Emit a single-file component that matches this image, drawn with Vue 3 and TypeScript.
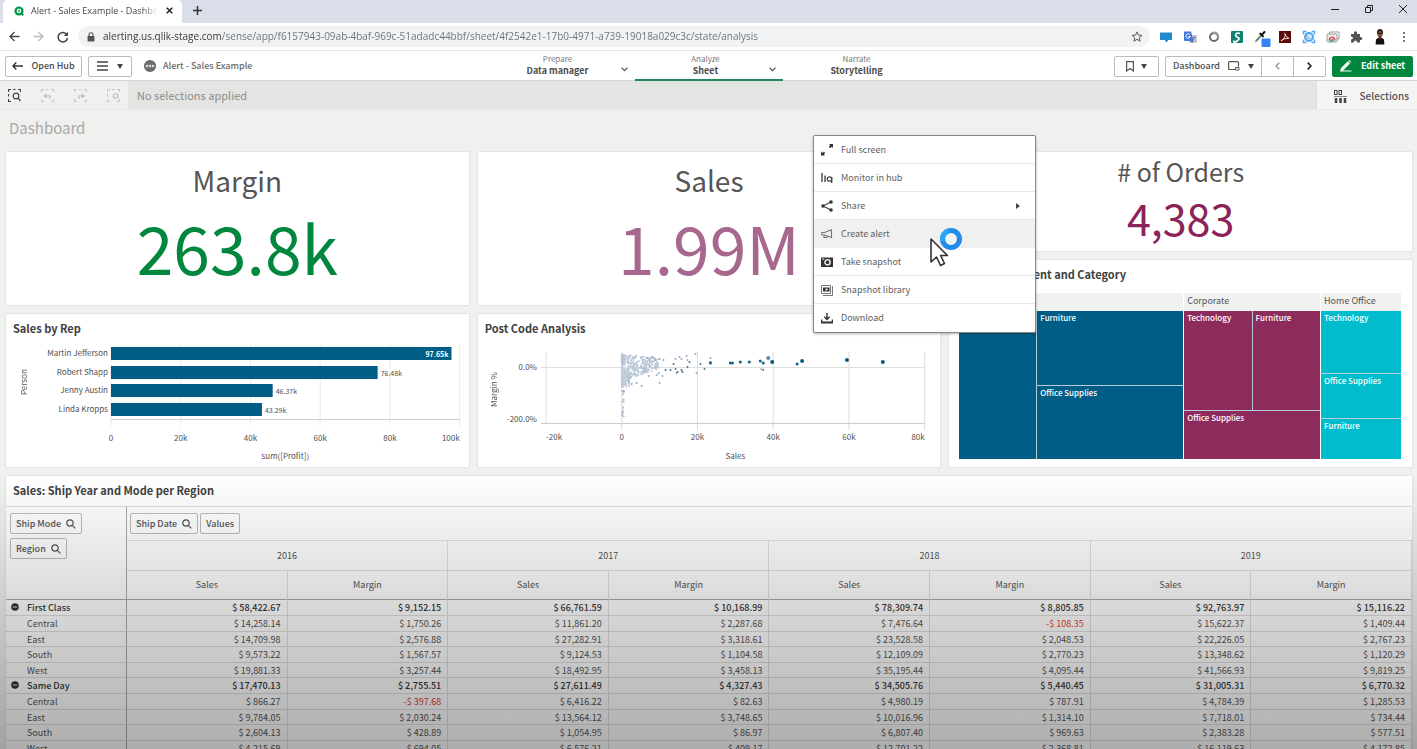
<script setup lang="ts">
import { ref } from 'vue'

const address = ref('alerting.us.qlik-stage.com/sense/app/f6157943-09ab-4baf-969c-51adadc44bbf/sheet/4f2542e1-17b0-4971-a739-19018a029c3c/state/analysis')

interface Rep { name: string; value: number; label: string; inside: boolean }
const reps: Rep[] = [
  { name: 'Martin Jefferson', value: 97.65, label: '97.65k', inside: true },
  { name: 'Robert Shapp', value: 76.48, label: '76.48k', inside: false },
  { name: 'Jenny Austin', value: 46.37, label: '46.37k', inside: false },
  { name: 'Linda Kropps', value: 43.29, label: '43.29k', inside: false },
]
const barTicks = [0, 20, 40, 60, 80, 100]
const barY = (i: number) => 3 + Math.round(i * 18.7)
const tickLabel = (t: number) => (t === 0 ? '0' : t + 'k')

const scatterTicks = [-20, 0, 20, 40, 60, 80]
interface Dot { x: number; y: number; r: number; c: string }
// x is a percentage of the plot width, y is pixels from its top
const px = (v: number) => ((v - 70) / 380) * 100
function cloud(): Dot[] {
  let seed = 17
  const rnd = () => {
    seed = (seed * 16807) % 2147483647
    return seed / 2147483647
  }
  const dots: Dot[] = []
  for (let i = 0; i < 340; i++) {
    const u = Math.pow(rnd(), 1.9)
    const spread = 28 - u * 17
    dots.push({ x: px(146 + u * 37), y: 2 + rnd() * spread + u * 4, r: 1, c: i % 3 ? '#c3cedb' : '#aebfd0' })
  }
  for (let i = 0; i < 50; i++) {
    dots.push({ x: px(146 + rnd() * 8), y: 20 + rnd() * 15, r: 1, c: '#c0cbd9' })
  }
  for (let i = 0; i < 26; i++) {
    dots.push({ x: px(146 + rnd() * 2), y: 32 + rnd() * 33, r: 1, c: '#b9c6d6' })
  }
  return dots
}
const mid: number[][] = [
  [166, 8], [171, 6], [176, 5], [178, 8], [183, 7], [187, 8], [199, 7], [203, 5], [205, 7], [210, 4], [211, 8],
  [219, 2], [234, 6], [165, 16], [173, 14], [168, 20], [180, 23], [182, 21], [186, 24], [200, 21], [220, 21],
  [160, 31], [165, 34], [183, 31], [155, 32], [147, 39], [285, 17], [152, 30], [158, 22], [172, 24],
]
const strong: number[][] = [
  [198, 12], [214, 10], [190, 18], [195, 18], [200, 17], [202, 20], [207, 20], [206, 18], [212, 15], [225, 12],
  [229, 17], [235, 10], [288, 18],
]
const big: number[][] = [
  [255, 11], [257, 11], [265, 10], [274, 10], [285, 9], [288, 11], [322, 12], [235, 11],
]
const biggest: number[][] = [[297, 10], [327, 9], [372, 8], [408, 10]]
const dots: Dot[] = [
  ...cloud(),
  ...mid.map(([x, y]) => ({ x: px(x + 1), y, r: 1, c: '#93a9c0' })),
  ...strong.map(([x, y]) => ({ x: px(x), y, r: 1, c: '#3f7396' })),
  { x: px(293), y: 6, r: 2, c: '#5c88a8' },
  ...big.map(([x, y]) => ({ x: px(x), y, r: 1.5, c: '#15628a' })),
  ...biggest.map(([x, y]) => ({ x: px(x), y, r: 2, c: '#0a5a85' })),
]

const years = ['2016', '2017', '2018', '2019']
interface Row { name: string; total: boolean; cells: string[] }
const rows: Row[] = [
  { name: 'First Class', total: true, cells: ['$ 58,422.67', '$ 9,152.15', '$ 66,761.59', '$ 10,168.99', '$ 78,309.74', '$ 8,805.85', '$ 92,763.97', '$ 15,116.22'] },
  { name: 'Central', total: false, cells: ['$ 14,258.14', '$ 1,750.26', '$ 11,861.20', '$ 2,287.68', '$ 7,476.64', '-$ 108.35', '$ 15,622.37', '$ 1,409.44'] },
  { name: 'East', total: false, cells: ['$ 14,709.98', '$ 2,576.88', '$ 27,282.91', '$ 3,318.61', '$ 23,528.58', '$ 2,048.53', '$ 22,226.05', '$ 2,767.23'] },
  { name: 'South', total: false, cells: ['$ 9,573.22', '$ 1,567.57', '$ 9,124.53', '$ 1,104.58', '$ 12,109.09', '$ 2,770.23', '$ 13,348.62', '$ 1,120.29'] },
  { name: 'West', total: false, cells: ['$ 19,881.33', '$ 3,257.44', '$ 18,492.95', '$ 3,458.13', '$ 35,195.44', '$ 4,095.44', '$ 41,566.93', '$ 9,819.25'] },
  { name: 'Same Day', total: true, cells: ['$ 17,470.13', '$ 2,755.51', '$ 27,611.49', '$ 4,327.43', '$ 34,505.76', '$ 5,440.45', '$ 31,005.31', '$ 6,770.32'] },
  { name: 'Central', total: false, cells: ['$ 866.27', '-$ 397.68', '$ 6,416.22', '$ 82.63', '$ 4,980.19', '$ 787.91', '$ 4,784.39', '$ 1,285.53'] },
  { name: 'East', total: false, cells: ['$ 9,784.05', '$ 2,030.24', '$ 13,564.12', '$ 3,748.65', '$ 10,016.96', '$ 1,314.10', '$ 7,718.01', '$ 734.44'] },
  { name: 'South', total: false, cells: ['$ 2,604.13', '$ 428.89', '$ 1,054.95', '$ 86.97', '$ 6,807.40', '$ 969.63', '$ 2,383.28', '$ 577.51'] },
  { name: 'West', total: false, cells: ['$ 4,215.69', '$ 694.05', '$ 6,576.21', '$ 409.17', '$ 12,701.22', '$ 2,368.81', '$ 16,119.63', '$ 4,172.85'] },
]
</script>

<template>
  <div class="window">
    <header class="tabstrip">
      <div class="tab">
        <svg class="favicon" viewBox="0 0 10 10"><circle cx="5" cy="5" r="4.6" fill="#009845" /><path d="M6.5 6.5 9.4 9.4" stroke="#009845" stroke-width="1.8" /><circle cx="5" cy="4.9" r="2.3" fill="#fff" /><path d="M6 4Q4.2 3.5 4.3 4.5L5.8 5.2Q5.8 6.3 4 5.9" fill="none" stroke="#009845" stroke-width=".8" /></svg>
        <span class="tab-title">Alert - Sales Example - Dashboard</span>
        <button class="plain" aria-label="Close tab"><svg width="7" height="7" viewBox="0 0 7 7"><path d="M.7.7 6.3 6.3M6.3.7.7 6.3" stroke="#222" stroke-width="1.5" /></svg></button>
      </div>
      <button class="plain newtab" aria-label="New tab"><svg width="9" height="9" viewBox="0 0 9 9"><path d="M4.5 0V9M0 4.5H9" stroke="#333" stroke-width="1.5" /></svg></button>
      <div class="winctl">
        <button class="plain" aria-label="Minimize"><svg width="8" height="8" viewBox="0 0 8 8"><path d="M0 4.5H8" stroke="#222" /></svg></button>
        <button class="plain" aria-label="Restore"><svg width="8" height="8" viewBox="0 0 8 8" fill="none" stroke="#222"><path d="M.5 2.5H5.5V7.5H.5ZM2.5 2V.5H7.5V5.5H6" /></svg></button>
        <button class="plain" aria-label="Close"><svg width="8" height="8" viewBox="0 0 8 8"><path d="M0 0 8 8M8 0 0 8" stroke="#222" /></svg></button>
      </div>
    </header>

    <div class="toolbar">
      <div class="navbtns">
        <button class="plain" aria-label="Back"><svg width="11" height="11" viewBox="0 0 11 11" fill="none" stroke="#444" stroke-width="1.3"><path d="M10.5 5.5H1M5.5 1 1 5.5 5.5 10" /></svg></button>
        <button class="plain" aria-label="Forward"><svg width="11" height="11" viewBox="0 0 11 11" fill="none" stroke="#bbb" stroke-width="1.3"><path d="M.5 5.5H10M5.5 1 10 5.5 5.5 10" /></svg></button>
        <button class="plain" aria-label="Reload"><svg width="12" height="12" viewBox="0 0 12 12"><path d="M9.8 3.6A4.7 4.7 0 1 0 10.5 7" fill="none" stroke="#444" stroke-width="1.5" /><path d="M11 .7V5H6.7Z" fill="#444" /></svg></button>
      </div>
      <div class="omnibox">
        <svg width="8" height="10" viewBox="0 0 8 10"><rect x=".5" y="4" width="7" height="5.5" rx=".8" fill="#555" /><path d="M2 4.5V2.7a2 2 0 0 1 4 0V4.5" fill="none" stroke="#555" stroke-width="1.1" /></svg>
        <input v-model="address" class="address" type="text" aria-label="Address" spellcheck="false" />
        <button class="plain" aria-label="Bookmark page"><svg width="12" height="11" viewBox="0 0 12 11"><path d="M6 .9 7.4 4.1 11 4.4 8.3 6.7 9.1 10.2 6 8.3 2.9 10.2 3.7 6.7 1 4.4 4.6 4.1Z" fill="none" stroke="#555" /></svg></button>
      </div>
      <div class="extensions">
        <svg viewBox="0 0 16 16"><path d="M2 3.5H14V11H10.5L8 13.5 7 11H2Z" fill="#2089d0" /></svg>
        <svg viewBox="0 0 16 16"><rect x="7" y="6" width="8" height="8" fill="#c6cad2" /><path d="M2 2.5H9L11.5 12H3Q2 12 2 11Z" fill="#4379dd" /><path d="M10 13.8 8.5 12H11.5Z" fill="#2b57b5" /><path d="M8 5.8A2.2 2.2 0 1 0 8.3 7.5H6.5" fill="none" stroke="#fff" /><path d="M10.5 8.5H14M12.2 7.5V8.5Q12 10.5 10.8 11.5M11.4 9.5Q12.5 11 13.5 11.5" stroke="#777" stroke-width=".7" fill="none" /></svg>
        <svg viewBox="0 0 16 16"><circle cx="8" cy="8" r="4" fill="none" stroke="#666" stroke-width="1.9" /><path d="M6.5 4A4 4 0 0 1 12 8.5" fill="none" stroke="#999" stroke-width="2.4" /></svg>
        <svg viewBox="0 0 16 16"><rect x="2" y="2" width="12" height="12" rx="1" fill="#118272" /><path d="M11 4.5Q7.3 3.2 6.8 5.5T9 8.5 8 12 5 11.5" fill="none" stroke="#fff" stroke-width="1.6" /></svg>
        <svg viewBox="0 0 16 16"><path d="M2 13.5 2.6 11 7.5 5.8 9 7.3 4.5 12Z" fill="#6d8b75" /><path d="M7.200 4.600 10 7.400M8.600 6 11.500 3" stroke="#111" stroke-width="2" stroke-linecap="round" /><rect x="8.5" y="9.5" width="9" height="8.5" rx="1" fill="#3584f5" /></svg>
        <svg viewBox="0 0 16 16"><rect x="2" y="2" width="12" height="12" fill="#5b0d0d" /><path d="M7.6 4.2Q9.3 4.2 8 7.5T4 12Q4.8 9.4 12 9.4 9.2 8.2 7.4 4.6" fill="none" stroke="#f2dcdc" stroke-width="1" /></svg>
        <svg viewBox="0 0 16 16" fill="none" stroke="#58a6ea"><path d="M2.5 5.500V2.5H5.500M10.5 2.5H13.5V5.500M13.5 10.5V13.5H10.5M5.5 13.5H2.5V10.5" stroke-width="1.5" /><circle cx="8" cy="8" r="4" fill="#cfe5f9" stroke-width="1.9" /><path d="M5.5 6 7 9.5 10.5 10" stroke="#7fbaf0" stroke-width="1.2" /></svg>
        <svg viewBox="0 0 16 16"><path d="M4.5 5V3H14V10H12" fill="none" stroke="#999" /><rect x="2" y="5" width="10" height="8" rx="1" fill="#eee" stroke="#999" /><path d="M4.5 11.5A2.8 2.8 0 0 1 7 8.2" fill="none" stroke="#da4d42" stroke-width="1.6" /><path d="M7 8.2a2.8 2.8 0 0 1 2.7 3.3" fill="none" stroke="#da4d42" stroke-width="1.6" /><path d="M5 12.5 6 11" stroke="#4ba65b" stroke-width="1.5" /><circle cx="7.4" cy="11.2" r="1.2" fill="#427ee6" /></svg>
        <svg viewBox="0 0 16 16"><path d="M3 5H6Q5.5 2.2 7.5 2.2T9 5H12V8Q14.3 7.6 14.3 9.5T12 11V13.5H9.2Q9 11.4 7.5 11.4T5.8 13.5H3V10.6Q5 10.4 5 9.1T3 7.6Z" fill="#555" /></svg>
        <svg viewBox="0 0 16 16"><path d="M5 3.500Q5 0 8 0T11 3.500L10 7.500H6Z" fill="#2b1a12" /><ellipse cx="8" cy="5" rx="2.2" ry="2.900" fill="#8e5538" /><path d="M5.8 4.300H10.2" stroke="#111" /><path d="M3.6 15.5 4 10.5 7 8.300V7.500H9V8.300L12 10.5 12.4 15.5Z" fill="#17120f" /><path d="M7 8.3 8 11 9 8.3Z" fill="#b52f2f" /></svg>
        <svg viewBox="0 0 16 16" fill="#555"><circle cx="8" cy="4" r="1.1" /><circle cx="8" cy="8" r="1.1" /><circle cx="8" cy="12" r="1.1" /></svg>
      </div>
    </div>

    <div class="appbar">
      <div class="app-left">
        <button class="btn hub"><svg width="11" height="8" viewBox="0 0 11 8"><path d="M11 4H1M4.3.6.9 4 4.3 7.4" fill="none" stroke="#333" stroke-width="1.4" /></svg>Open Hub</button>
        <button class="btn menu-btn" aria-label="Navigation menu"><svg width="11" height="10" viewBox="0 0 11 10"><path d="M0 1H11M0 5H11M0 9H11" stroke="#444" stroke-width="1.5" /></svg><i class="caret"></i></button>
        <svg class="app-icon" viewBox="0 0 12 12"><circle cx="6" cy="6" r="6" fill="#6b6b6b" /><path d="M0 3.8H12V8.2H0Z" fill="#777" /><circle cx="3" cy="6" r="1" fill="#fff" /><circle cx="6" cy="6" r="1" fill="#fff" /><circle cx="9" cy="6" r="1" fill="#fff" /></svg>
        <span class="app-name">Alert - Sales Example</span>
      </div>
      <nav class="modes">
        <a href="#" class="mode has-menu"><small>Prepare</small><b>Data manager</b><svg class="chev" viewBox="0 0 6 4"><path d="M.5.5 3 3 5.5.5" /></svg></a>
        <a href="#" class="mode has-menu active"><small>Analyze</small><b>Sheet</b><svg class="chev" viewBox="0 0 6 4"><path d="M.5.5 3 3 5.5.5" /></svg></a>
        <a href="#" class="mode"><small>Narrate</small><b>Storytelling</b></a>
      </nav>
      <div class="app-right">
        <button class="btn bookmark" aria-label="Bookmarks"><svg width="8" height="11" viewBox="0 0 8 11"><path d="M.6.6H7.4V10L4 7.4.6 10Z" fill="none" stroke="#555" stroke-width="1.2" /></svg><i class="caret"></i></button>
        <div class="stepper">
          <button class="btn sheet-btn">Dashboard<svg width="12" height="10" viewBox="0 0 12 10"><path d="M7 8.5H1.5Q.6 8.5.6 7.5V1.6Q.6.6 1.6.6H9.5Q10.5.6 10.5 1.6V5.5" fill="none" stroke="#555" stroke-width="1.2" /><path d="M7.5 6.5H11V9H7.5Z" fill="none" stroke="#555" /></svg><i class="caret"></i></button>
          <button class="btn step" aria-label="Previous sheet"><svg width="5" height="8" viewBox="0 0 5 8"><path d="M4.3.6 1 4 4.3 7.4" fill="none" stroke="#888" stroke-width="1.2" /></svg></button>
          <button class="btn step" aria-label="Next sheet"><svg width="5" height="8" viewBox="0 0 5 8"><path d="M.7.6 4 4 .7 7.4" fill="none" stroke="#222" stroke-width="1.6" /></svg></button>
        </div>
        <button class="btn edit"><svg width="12" height="12" viewBox="0 0 12 12"><path d="M0 11.5 1 8 7.8 1.2 10 3.4 3.3 10.2 2.2 10.5H11.5V11.5Z" fill="#fff" /><path d="M8.5.6 9.3 0 11.2 1.9 10.6 2.7Z" fill="#fff" /></svg>Edit sheet</button>
      </div>
    </div>

    <div class="selbar">
      <div class="seltools">
        <button class="plain" aria-label="Smart search"><svg width="13" height="13" viewBox="0 0 13 13" fill="none" stroke="#444"><path d="M.5 3V.5H3M5 .5H7.5M10 .5H12.5V3M.5 5V7.5M.5 10V12.5H3" stroke-width="1.2" /><circle cx="8" cy="7" r="2.8" stroke-width="1.2" /><path d="M10 9 12.5 12" stroke-width="1.3" /></svg></button>
        <button class="plain" aria-label="Step back" disabled><svg width="13" height="13" viewBox="0 0 13 13" fill="none" stroke="#c4c4c4"><path d="M.5 3V.5H3M5 .5H7.5M10 .5H12.5V3M.5 10V12.5H3M12.5 10V12.5H10" /><path d="M9 10V7H4" stroke-width="1.3" /><path d="M5.5 4.5V9.5L2.5 7Z" fill="#bbb" stroke="none" /></svg></button>
        <button class="plain" aria-label="Step forward" disabled><svg width="13" height="13" viewBox="0 0 13 13" fill="none" stroke="#c4c4c4"><path d="M.5 3V.5H3M5 .5H7.5M10 .5H12.5V3M.5 10V12.5H3M12.5 10V12.5H10" /><path d="M5 10V7H9" stroke-width="1.3" /><path d="M8 4.5V9.5L11 7Z" fill="#bbb" stroke="none" /></svg></button>
        <button class="plain" aria-label="Clear all selections" disabled><svg width="13" height="13" viewBox="0 0 13 13" fill="none" stroke="#c4c4c4"><path d="M.5 3V.5H3M5 .5H7.5M10 .5H12.5V3M.5 5V7.5M.5 10V12.5H3M12.5 10V12.5H10" /><circle cx="8.5" cy="7" r="2.3" stroke-width="1.3" /></svg></button>
      </div>
      <div class="selmsg">No selections applied</div>
      <button class="selections"><svg width="13" height="13" viewBox="0 0 13 13" fill="none" stroke="#444"><rect x=".5" y=".5" width="2.5" height="4" /><rect x="5" y=".5" width="2.5" height="4" /><path d="M0 6.5H13" stroke="#888" /><path d="M2 8V13M6.5 8V13M11 8V13" stroke-width="2.5" /></svg>Selections</button>
    </div>

    <main class="sheet">
      <h1 class="sheet-title">Dashboard</h1>
      <div class="cards">
        <section class="card kpi"><h2>Margin</h2><p class="green">263.8k</p></section>
        <section class="card kpi"><h2>Sales</h2><p class="mauve">1.99M</p></section>
        <div class="third">
          <section class="card kpi small"><h2># of Orders</h2><p class="wine">4,383</p></section>
          <section class="card treecard">
            <h3>Sales by Segment and Category</h3>
            <div class="treemap">
              <div class="segment blue">
                <div class="seg-name">Consumer</div>
                <div class="tiles consumer"><span class="tall">Technology</span><span>Furniture</span><span>Office Supplies</span></div>
              </div>
              <div class="segment purple">
                <div class="seg-name">Corporate</div>
                <div class="tiles corporate"><span>Technology</span><span>Furniture</span><span class="wide">Office Supplies</span></div>
              </div>
              <div class="segment cyan">
                <div class="seg-name">Home Office</div>
                <div class="tiles home"><span>Technology</span><span>Office Supplies</span><span>Furniture</span></div>
              </div>
            </div>
          </section>
        </div>

        <section class="card">
          <h3>Sales by Rep</h3>
          <div class="chart bar-chart">
            <div class="ytitle">Person</div>
            <svg class="plot">
              <line v-for="t in barTicks" :key="'g' + t" :x1="t + '%'" :x2="t + '%'" y1="0" y2="82" class="gridline" />
              <line x1="0" x2="100%" y1="75.5" y2="75.5" class="axis" />
              <g v-for="(r, i) in reps" :key="r.name">
                <text x="-3" :y="barY(i) + 9" text-anchor="end">{{ r.name }}</text>
                <rect x="0" :y="barY(i)" :width="r.value + '%'" height="13" fill="#005d85" />
                <text :x="r.value + '%'" :dx="r.inside ? -3 : 3" :y="barY(i) + 10" :text-anchor="r.inside ? 'end' : 'start'" :class="['val', { inside: r.inside }]">{{ r.label }}</text>
              </g>
              <text v-for="t in barTicks" :key="'t' + t" :x="t + '%'" y="97" :text-anchor="t === 100 ? 'end' : 'middle'">{{ tickLabel(t) }}</text>
              <text x="50%" y="115" text-anchor="middle">sum([Profit])</text>
            </svg>
          </div>
        </section>

        <section class="card">
          <h3>Post Code Analysis</h3>
          <div class="chart scatter-chart">
            <div class="ytitle">Margin %</div>
            <svg class="plot">
              <line v-for="t in scatterTicks" :key="'g' + t" :x1="t + 20 + '%'" :x2="t + 20 + '%'" y1="0" :y2="t < 0 ? 72 : 78" class="gridline strong" />
              <line x1="-5" x2="100%" y1="15.5" y2="15.5" class="gridline strong" />
              <line x1="-5" x2="100%" y1="71.5" y2="71.5" class="axis" />
              <circle v-for="(d, i) in dots" :key="i" :cx="d.x + '%'" :cy="d.y" :r="d.r" :fill="d.c" />
              <text x="-9" y="18" text-anchor="end">0.0%</text>
              <text x="-9" y="70" text-anchor="end">-200.0%</text>
              <text v-for="t in scatterTicks" :key="'t' + t" :x="t + 20 + '%'" y="88" :text-anchor="t < 0 ? 'start' : t === 80 ? 'end' : 'middle'">{{ tickLabel(t) }}</text>
              <text x="50%" y="107" text-anchor="middle">Sales</text>
            </svg>
          </div>
        </section>

        <section class="card pivot">
          <h3>Sales: Ship Year and Mode per Region</h3>
          <table>
            <colgroup><col class="c-name" /><col v-for="n in 8" :key="n" /></colgroup>
            <thead>
              <tr class="r-chips">
                <td rowspan="3" class="dims">
                  <button class="chip">Ship Mode<svg viewBox="0 0 10 10"><circle cx="4" cy="4" r="3.2" /><path d="M6.3 6.3 9.3 9.3" /></svg></button>
                  <button class="chip">Region<svg viewBox="0 0 10 10"><circle cx="4" cy="4" r="3.2" /><path d="M6.3 6.3 9.3 9.3" /></svg></button>
                </td>
                <td colspan="8" class="topdims">
                  <button class="chip">Ship Date<svg viewBox="0 0 10 10"><circle cx="4" cy="4" r="3.2" /><path d="M6.3 6.3 9.3 9.3" /></svg></button>
                  <button class="chip">Values</button>
                </td>
              </tr>
              <tr class="r-years"><th v-for="y in years" :key="y" colspan="2" scope="colgroup">{{ y }}</th></tr>
              <tr class="r-measures">
                <template v-for="y in years" :key="y"><th scope="col">Sales</th><th scope="col">Margin</th></template>
              </tr>
            </thead>
            <tbody>
              <tr v-for="(row, i) in rows" :key="i" :class="{ total: row.total }">
                <th scope="row"><svg v-if="row.total" class="minus" viewBox="0 0 8 8"><circle cx="4" cy="4" r="3.8" fill="#333" /><path d="M1.8 4H6.2" stroke="#ccc" stroke-width="1.2" /></svg>{{ row.name }}</th>
                <td v-for="(c, j) in row.cells" :key="j" :class="{ neg: c.startsWith('-') }">{{ c }}</td>
              </tr>
            </tbody>
          </table>
        </section>
      </div>
    </main>

    <div class="shade"></div>

    <ul class="ctx" role="menu">
      <li><button role="menuitem"><svg viewBox="0 0 12 12" fill="#333"><path d="M8 0H12V4L10.8 2.8 9.3 4.2 7.8 2.7 9.2 1.2Z" /><path d="M0 7.5V11.5H4L2.8 10.3 4.2 8.9 2.9 7.6 1.4 8.9Z" /></svg>Full screen</button></li>
      <li><button role="menuitem"><svg viewBox="0 0 12 12" fill="none" stroke="#444"><path d="M1 1V10M4 3.5V10" stroke-width="1.4" /><circle cx="8.5" cy="7" r="2.2" stroke-width="1.3" /><path d="M10.7 5V11" stroke-width="1.3" /></svg>Monitor in hub</button></li>
      <li><button role="menuitem"><svg viewBox="0 0 12 12"><path d="M10 2 2 6 10 10" fill="none" stroke="#444" stroke-width="1.2" /><circle cx="10" cy="2" r="1.8" fill="#333" /><circle cx="2" cy="6" r="1.8" fill="#333" /><circle cx="10" cy="10" r="1.8" fill="#333" /></svg>Share<i class="sub"></i></button></li>
      <li><button role="menuitem" class="hover"><svg viewBox="0 0 12 12" fill="none" stroke="#777"><path d="M.8 4.5H3.500L10.5 1.800V9.500L3.500 7H.8ZM3 7.5V9.5H6V8.5" stroke-width="1.1" /></svg>Create alert</button></li>
      <li><button role="menuitem"><svg viewBox="0 0 12 12"><path d="M0 1.5H12V11H0Z" fill="#333" /><circle cx="6.5" cy="6.3" r="2.6" fill="none" stroke="#fff" stroke-width="1.3" /><rect x="1.2" y="2.6" width="2" height="1" fill="#fff" /></svg>Take snapshot</button></li>
      <li><button role="menuitem"><svg viewBox="0 0 12 12"><path d="M.5 1.5H9.500V9.5H.5ZM11.5 2V11.5H2" fill="none" stroke="#777" /><path d="M2 3.5H8.500V7.5H2Z" fill="#333" /><circle cx="5.5" cy="5.5" r="1.1" fill="#fff" /></svg>Snapshot library</button></li>
      <li><button role="menuitem"><svg viewBox="0 0 12 12"><path d="M6 1V7M3.3 4.7 6 7.4 8.7 4.7" fill="none" stroke="#333" stroke-width="1.4" /><path d="M0 7.5H1.3V9.5H10.7V7.5H12V11.5H0Z" fill="#333" /></svg>Download</button></li>
    </ul>

    <svg class="pointer" viewBox="0 0 36 42">
      <path d="M2 11V34L7.5 29 11.5 37.5 15.5 35.5 11.7 27.5H18.5Z" fill="#fff" stroke="#333" stroke-width="1.6" stroke-linejoin="round" />
      <circle cx="22" cy="11" r="8.5" fill="#eef3f8" stroke="#2389ea" stroke-width="5" />
      <path d="M13.8 13.2A8.5 8.5 0 0 1 19.8 2.8" fill="none" stroke="#27a5f8" stroke-width="5" />
    </svg>
  </div>
</template>

<style>
body { margin: 0; overflow: hidden; }
</style>

<style scoped>
.window { position: relative; height: 100vh; overflow: hidden; display: flex; flex-direction: column; background: #f0f0ef; color: #555; font-family: "Noto Sans CJK SC", "Noto Sans", sans-serif; font-size: 9px; line-height: 14px; }
.window * { box-sizing: border-box; }
h1, h2, h3, p, ul { margin: 0; padding: 0; }
button { font: inherit; color: inherit; cursor: pointer; }
svg { display: block; flex: none; }
a { color: inherit; text-decoration: none; }
.plain { border: 0; background: none; padding: 0; display: grid; place-items: center; }

.tabstrip { flex: none; height: 23px; background: #dadee8; display: flex; align-items: center; font-family: "Open Sans", sans-serif; }
.tab { align-self: stretch; margin-left: 3px; width: 179px; background: #fff; border-radius: 5px 5px 0 0; display: flex; align-items: center; padding: 0 9px 2px 11px; color: #444; }
.favicon { width: 10px; height: 10px; }
.tab-title { flex: 1; margin: 0 8px 0 7px; overflow: hidden; white-space: nowrap; mask-image: linear-gradient(90deg, #000 88%, transparent); }
.newtab { margin-left: 11px; padding-bottom: 2px; }
.winctl { margin-left: auto; display: flex; gap: 26px; padding: 0 10px 6px 0; }

.toolbar { flex: none; height: 28px; background: #fff; border-bottom: 1px solid #e2e4e8; display: flex; align-items: center; font-family: "Open Sans", sans-serif; }
.navbtns { width: 78px; display: flex; gap: 13px; padding-left: 9px; align-items: center; }
.omnibox { flex: 1; height: 21px; border-radius: 11px; background: #f0f2f4; display: flex; align-items: center; padding: 0 7px 0 9px; gap: 8px; }
.address { flex: 1; min-width: 0; border: 0; padding: 0; outline: 0; font: inherit; font-size: 10px; line-height: 19px; color: transparent; background: linear-gradient(90deg, #333 118px, #6c7074 118px); background-clip: text; -webkit-background-clip: text; }
.extensions { width: 254px; margin: 0 5px 0 8px; display: flex; justify-content: space-between; }
.extensions svg { width: 16px; height: 16px; overflow: visible; }

.appbar { flex: none; height: 30px; background: #fff; display: grid; grid-template-columns: 1fr auto 1fr; align-items: center; border-bottom: 1px solid #d4d4d4; }
.app-left, .app-right { display: flex; align-items: center; padding: 0 4px 0 5px; }
.app-right { justify-content: flex-end; gap: 6px; }
.btn { height: 21px; border: 1px solid #bbb; border-radius: 2px; background: #fff; display: flex; align-items: center; justify-content: center; padding: 0; font-weight: 500; color: #4c4c4c; }
.hub { width: 77px; gap: 8px; }
.menu-btn { width: 44px; gap: 9px; margin-left: 6px; }
.caret { border: 3px solid transparent; border-top: 5px solid #444; border-bottom: 0; }
.app-icon { width: 12px; height: 12px; margin: 0 7px 0 12px; }
.app-name { font-weight: 500; color: #6a6a6a; }
.modes { display: flex; align-self: stretch; }
.mode { position: relative; width: 148px; height: 30px; display: flex; flex-direction: column; align-items: center; padding-top: 2px; border-bottom: 2px solid transparent; }
.mode.has-menu { padding-right: 6px; }
.mode.active { border-bottom-color: #1d8a57; }
.mode small { font-size: 8px; line-height: 12px; color: #777; }
.mode b { line-height: 12px; color: #4c4c4c; }
.chev { position: absolute; right: 7px; top: 16px; width: 7px; height: 5px; fill: none; stroke: #555; }
.bookmark { width: 45px; gap: 7px; }
.stepper { display: flex; }
.stepper .btn { border-radius: 0; margin-left: -1px; }
.stepper .btn:first-child { border-radius: 2px 0 0 2px; margin-left: 0; }
.stepper .btn:last-child { border-radius: 0 2px 2px 0; }
.sheet-btn { width: 97px; gap: 8px; }
.step { width: 33px; }
.edit { width: 81px; gap: 9px; background: #00873d; border-color: #00873d; color: #fff; font-weight: 700; }

.selbar { flex: none; height: 29px; display: flex; background: #e4e4e3; border-bottom: 1px solid #e9e9e8; }
.seltools { width: 128px; background: #f0f0ef; display: flex; align-items: center; padding-left: 8px; gap: 20px; }
.selmsg { flex: 1; font-size: 11px; line-height: 29px; padding-left: 9px; color: #8c8c8c; }
.selections { width: 101px; border: 0; border-left: 1px solid #ddd; background: #f4f4f3; display: flex; align-items: center; justify-content: space-between; padding: 2px 8px 0 17px; font-size: 10px; color: #555; font-weight: 500; }

.sheet { flex: none; padding: 0 4px 0 5px; }
.sheet-title { height: 41px; padding: 9px 4px 0; font-size: 15px; line-height: 18px; font-weight: 400; color: #a8a8a7; }
.cards { display: grid; grid-template-columns: repeat(3, minmax(0, 1fr)); grid-auto-rows: auto; gap: 7px; }
.card { min-height: 155px; background: #fff; border: 1px solid #e4e4e3; border-radius: 2px; }
.third { grid-column: 3; grid-row: 1 / span 2; display: flex; flex-direction: column; gap: 7px; }
.kpi { text-align: center; padding-top: 8px; }
.kpi h2 { font-size: 28px; line-height: 40px; font-weight: 400; color: #555; }
.kpi p { font-size: 66px; line-height: 92px; }
.kpi.small { padding-top: 2px; min-height: 101px; }
.kpi.small h2 { font-size: 25px; line-height: 34px; }
.kpi.small p { font-size: 43px; line-height: 58px; }
.kpi .green { color: #00873d; }
.kpi .mauve { color: #a7678f; }
.kpi .wine { color: #8b2358; }
h3 { font-size: 11px; line-height: 16px; font-weight: 700; color: #404040; padding: 6px 7px 0; }

.treecard { flex: 1; display: flex; flex-direction: column; min-height: 0; }
.treemap { flex: 1; margin: 11px 11px 8px 10px; display: grid; grid-template-columns: 224fr 136fr 80fr; gap: 1px; }
.segment { display: flex; flex-direction: column; min-width: 0; }
.seg-name { height: 18px; line-height: 16px; padding-left: 3px; background: #f1f1f0; color: #555; white-space: nowrap; }
.tiles { flex: 1; display: grid; gap: 1px; background: #b7cbd8; }
.tiles span { padding: 0 3px; font-size: 8px; line-height: 14px; font-weight: 500; color: #fff; white-space: nowrap; }
.consumer { grid-template-columns: 77fr 146fr; grid-template-rows: 75fr 73fr; }
.consumer .tall { grid-row: span 2; }
.corporate { grid-template-columns: 1fr 1fr; grid-template-rows: 100fr 48fr; }
.corporate .wide { grid-column: span 2; }
.home { grid-template-rows: 62fr 45fr 40fr; }
.blue span { background: #005d85; }
.purple span { background: #8e2b5d; }
.cyan span { background: #00bccc; }

.chart { display: flex; }
.ytitle { writing-mode: vertical-rl; transform: rotate(180deg); text-align: center; font-size: 8px; line-height: 12px; }
.plot { flex: 1; min-width: 0; height: 112px; overflow: visible; }
.plot text { font-size: 8px; fill: #505050; }
.plot .val { font-size: 7px; }
.plot .inside { fill: #fff; font-weight: 700; }
.gridline { stroke: #ebebeb; }
.gridline.strong { stroke: #dedede; }
.axis { stroke: #ccc; }
.bar-chart { padding: 8px 9px 0 12px; }
.bar-chart .ytitle { height: 76px; margin-right: 81px; }
.scatter-chart { padding: 16px 16px 0 10px; }
.scatter-chart .ytitle { height: 76px; margin-right: 46px; }

.pivot { grid-column: 1 / -1; }
table { width: 100%; table-layout: fixed; border-collapse: separate; border-spacing: 0; margin-top: 8px; }
td, th { padding: 0; border: 0 solid #dfdfde; font-weight: 400; }
.c-name { width: 121px; }
.r-chips { height: 34px; }
.r-chips td { vertical-align: top; border-top-width: 1px; }
.r-chips .dims { border-right: 1px solid #aaa; border-bottom: 1px solid #aaa; }
.dims, .topdims { padding: 6px 4px 0; }
.topdims { padding-left: 3px; }
.chip { height: 21px; border: 1px solid #bbb; border-radius: 2px; background: transparent; padding: 0 5px; display: inline-flex; align-items: center; gap: 5px; font-weight: 500; vertical-align: top; margin: 0 2px 4px 0; }
.chip svg { width: 10px; height: 10px; fill: none; stroke: #555; stroke-width: 1.2; }
.r-years { height: 30px; }
.r-years th { border-top-width: 1px; border-right-width: 1px; }
.r-measures { height: 30px; }
.r-measures th { border-top-width: 1px; border-right-width: 1px; border-bottom: 1px solid #aaa; }
tbody tr { height: 16px; }
tbody tr:nth-child(5n + 3), tbody tr:nth-child(5n) { height: 15px; }
tbody tr.total { height: 16px; }
tbody td { text-align: right; padding-right: 6px; border-bottom-width: 1px; border-right-width: 1px; line-height: 13px; }
tbody th { position: relative; text-align: left; padding-left: 21px; border-bottom-width: 1px; border-right: 1px solid #aaa; line-height: 13px; }
.total td, .total th { font-weight: 500; color: #383838; }
td.neg { color: #e8402f; }
.minus { position: absolute; left: 5px; top: 3px; width: 8px; height: 8px; }

.shade { position: absolute; left: 0; right: 0; bottom: 0; height: 274px; pointer-events: none; background: linear-gradient(rgba(0, 0, 0, 0), rgba(0, 0, 0, .32)); }

.ctx { position: absolute; left: 813px; top: 135px; width: 223px; list-style: none; background: #fff; border: 1px solid #888; border-radius: 2px; box-shadow: 0 1px 3px rgba(0, 0, 0, .3); }
.ctx li { height: 28px; border-bottom: 1px solid #e8e8e8; }
.ctx li:last-child { border-bottom: 0; }
.ctx button { width: 100%; height: 28px; border: 0; background: none; display: flex; align-items: center; gap: 8px; padding: 0 15px 0 7px; color: #606060; }
.ctx button.hover { background: #f0f0f0; }
.ctx svg { width: 12px; height: 12px; }
.sub { margin-left: auto; border: 3px solid transparent; border-left: 4px solid #444; border-right: 0; }
.pointer { position: absolute; left: 929px; top: 228px; width: 36px; height: 42px; pointer-events: none; }
</style>
